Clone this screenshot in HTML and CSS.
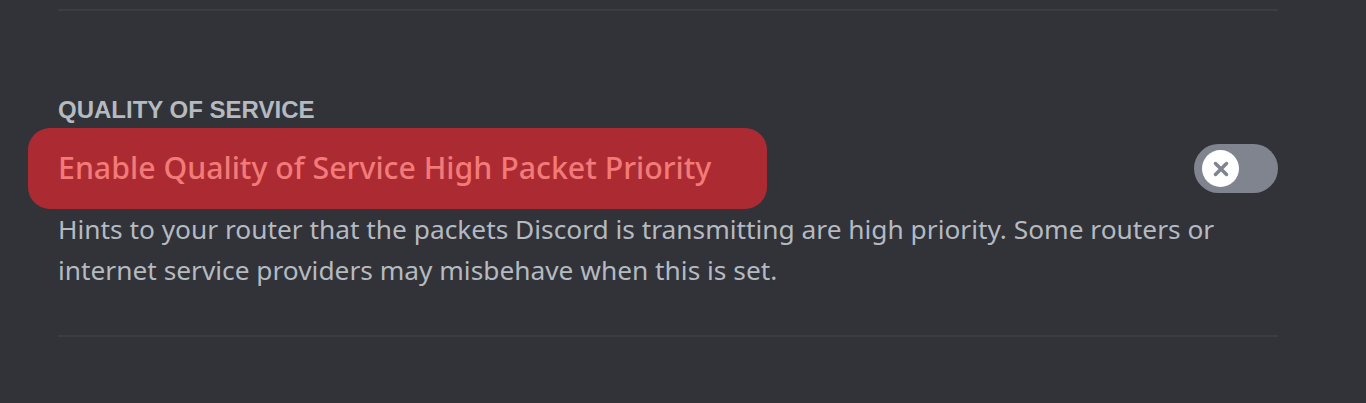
FILE: index.html
```html
<!DOCTYPE html>
<html>
<head>
  <meta charset="UTF-8" />
  <title>Voice Settings</title>
  <link rel="stylesheet" href="styles.css">
</head>
<body>

<div class="section">
  <div class="divider top"></div>

  <h5 class="heading">Quality of Service</h5>

  <div class="row">
    <label class="title"><span class="mark">Enable Quality of Service High Packet Priority</span></label>
    <div class="toggle">
      <div class="knob">
        <svg viewBox="0 0 20 20" width="22" height="22">
          <path d="M5 5 L15 15 M15 5 L5 15" stroke="#80848e" stroke-width="3.2" stroke-linecap="round" fill="none" />
        </svg>
      </div>
    </div>
  </div>

  <div class="note">Hints to your router that the packets Discord is transmitting are high priority. Some routers or internet service providers may misbehave when this is set.</div>

  <div class="divider bottom"></div>
</div>

</body>
</html>
```

FILE: styles.css
```css
html, body { margin: 0; height: 100%; }
body { background: #313338; font-family: "Noto Sans", "Open Sans", sans-serif; overflow: hidden; }

.section { width: 1220px; margin-left: 58px; padding-top: 9px; }
.divider { height: 2px; background: #3b3d43; }

.heading { margin: 85px 0 0; font-family: "Liberation Sans", Arial, sans-serif; font-size: 24px; font-weight: bold; text-transform: uppercase; color: #b5bac1; line-height: 28px; }

.row { display: flex; align-items: center; justify-content: space-between; margin-top: 4px; }
.title { display: block; font-size: 30.3px; font-weight: 500; color: #f27a78; line-height: 42px; }
.mark { display: inline-block; background: #ac2b32; margin-left: -30px; padding: 19px 56px 20px 30px; border-radius: 22px; }

.toggle { width: 84px; height: 49px; border-radius: 25px; background: #80848e; display: flex; align-items: center; padding-left: 8px; box-sizing: border-box; }
.knob { width: 37px; height: 37px; border-radius: 50%; background: #fff; display: flex; align-items: center; justify-content: center; }

.note { font-size: 26.3px; line-height: 41px; color: #b5bac1; width: 1190px; }
.divider.bottom { margin-top: 44px; }
```
